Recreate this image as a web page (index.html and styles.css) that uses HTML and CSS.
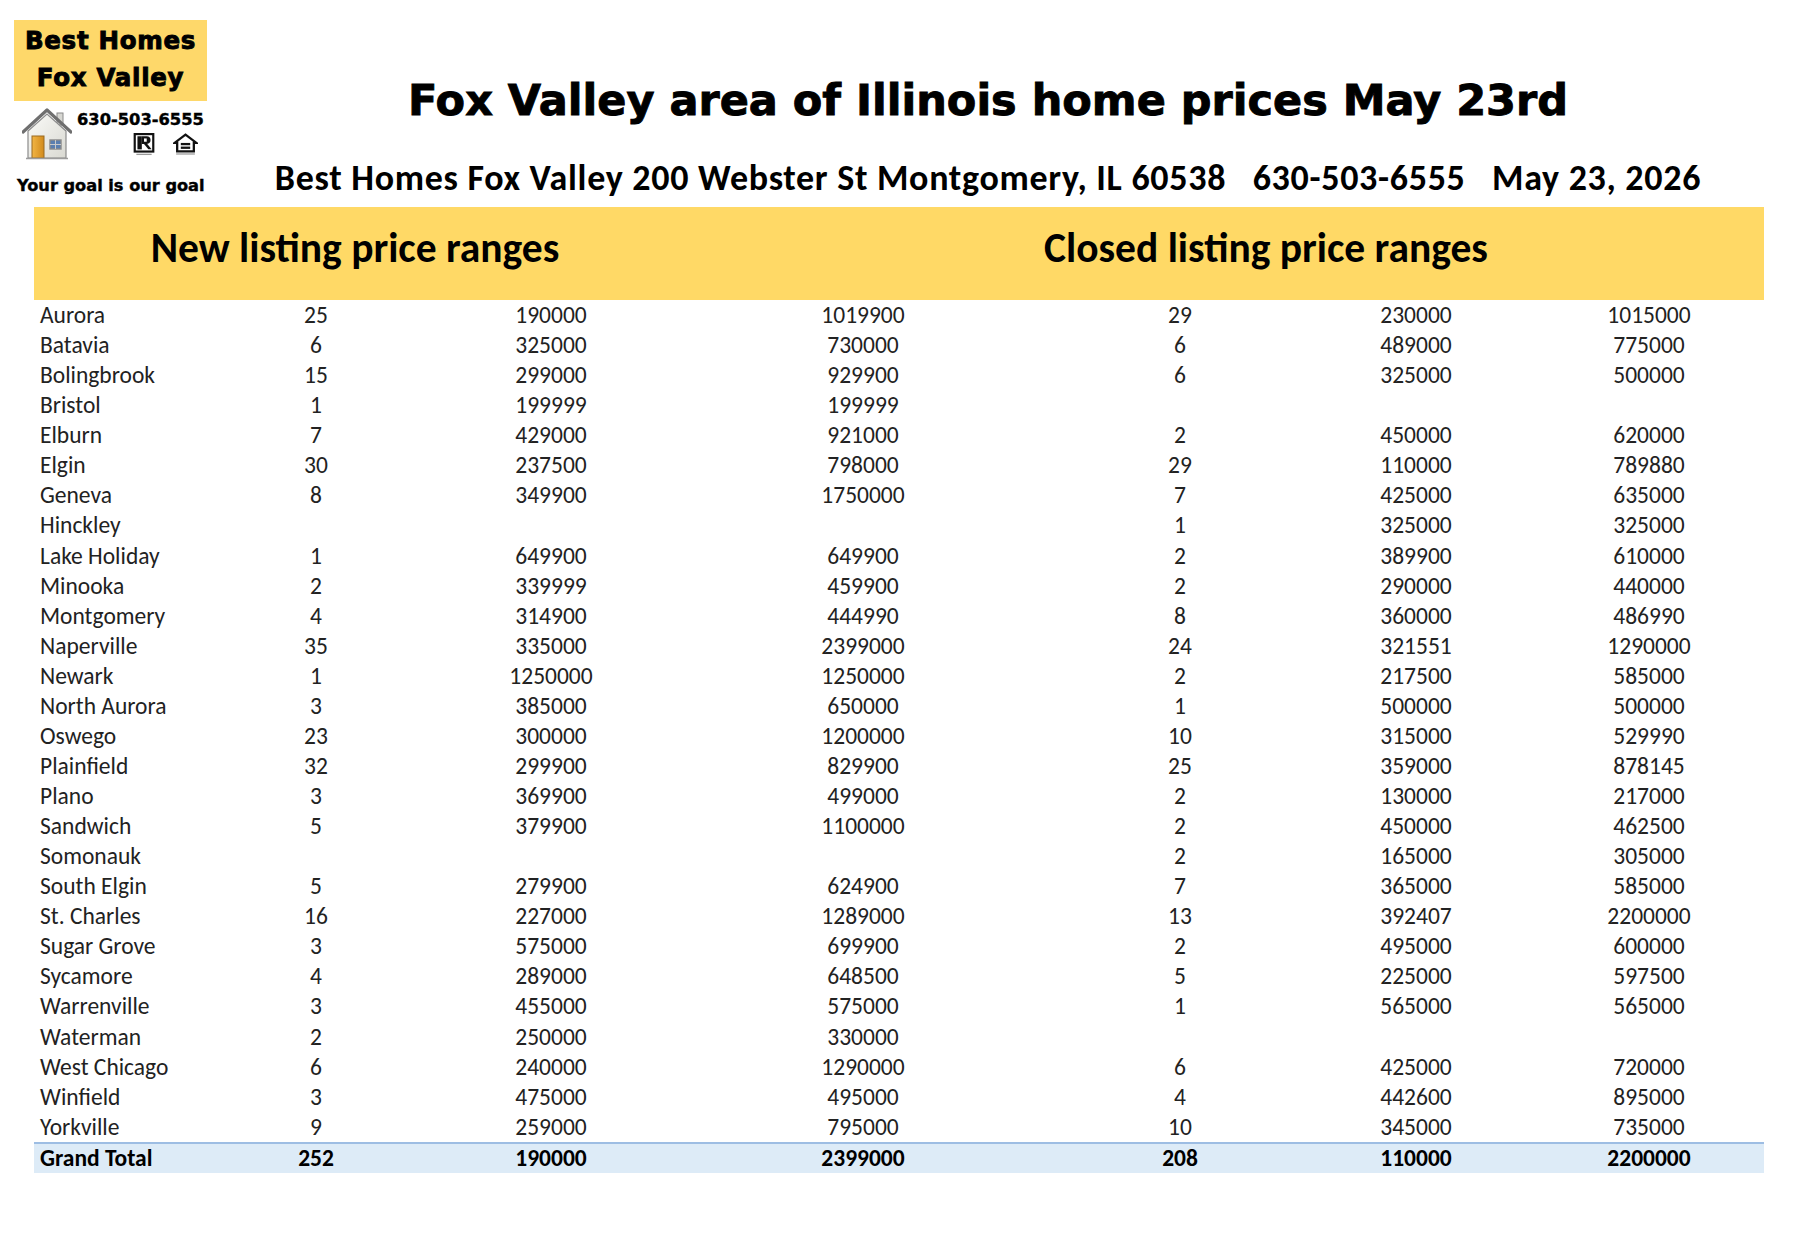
FILE: index.html
```html
<!DOCTYPE html>
<html lang="en">
<head>
<meta charset="utf-8">
<title>Fox Valley area of Illinois home prices May 23rd</title>
<link rel="stylesheet" href="styles.css">
</head>
<body>
<div class="page">
  <header class="top">
    <div class="logo">
      <div class="logo-box">
        <span>Best Homes</span>
        <span>Fox Valley</span>
      </div>
      <div class="logo-mid">
        <svg class="house" viewBox="0 0 50 52" width="50" height="52" aria-hidden="true">
          <defs>
            <linearGradient id="wall" x1="0" y1="0" x2="1" y2="1">
              <stop offset="0" stop-color="#fbfbf8"/>
              <stop offset="1" stop-color="#d9d9d2"/>
            </linearGradient>
            <linearGradient id="door" x1="0" y1="0" x2="1" y2="0">
              <stop offset="0" stop-color="#f2b544"/>
              <stop offset="1" stop-color="#d18a1c"/>
            </linearGradient>
          </defs>
          <rect x="35" y="5" width="6" height="12" fill="#d7d7d2" stroke="#8a8a8a" stroke-width="1"/>
          <path d="M6 23 L25 6 L44 23 L44 50 L6 50 Z" fill="url(#wall)" stroke="#8c8c8c" stroke-width="1.2"/>
          <path d="M1 24 L25 2 L49 24" fill="none" stroke="#6f6f6f" stroke-width="3.2" stroke-linejoin="round" stroke-linecap="round"/>
          <rect x="10" y="28" width="12" height="22" fill="url(#door)" stroke="#9a6a20" stroke-width="1"/>
          <rect x="28" y="32" width="11" height="9" fill="#5b7fb0" stroke="#8a8a8a" stroke-width="1.4"/>
          <line x1="33.5" y1="32" x2="33.5" y2="41" stroke="#c9c9c9" stroke-width="1"/>
          <line x1="28" y1="36.5" x2="39" y2="36.5" stroke="#c9c9c9" stroke-width="1"/>
          <line x1="4" y1="50.5" x2="46" y2="50.5" stroke="#9c9c9c" stroke-width="1.4"/>
        </svg>
        <div class="logo-right">
          <div class="phone">630-503-6555</div>
          <div class="badges">
            <svg class="badge" viewBox="0 0 20 22" width="22" height="24" aria-hidden="true">
              <rect x="1.5" y="1" width="17" height="16" fill="#fff" stroke="#111" stroke-width="2"/>
              <rect x="4" y="3" width="4" height="12" fill="#111"/>
              <path d="M8 3 H12.5 A3.5 3.5 0 0 1 12.5 10 H8 Z" fill="#111"/>
              <path d="M10 10 L14 15 H17 L13 10 Z" fill="#111"/>
              <rect x="10" y="5" width="2.5" height="3" fill="#fff"/>
              <rect x="3" y="19" width="14" height="1.2" fill="#9a9a9a"/>
            </svg>
            <svg class="badge eho" viewBox="0 0 24 22" width="25" height="23" aria-hidden="true">
              <path d="M12 1.5 L22.5 9.5 H20 V17.5 H4 V9.5 H1.5 Z" fill="#fff" stroke="#111" stroke-width="2.2" stroke-linejoin="miter"/>
              <rect x="7.5" y="9.5" width="9" height="2.2" fill="#111"/>
              <rect x="7.5" y="13" width="9" height="2.2" fill="#111"/>
              <rect x="3" y="19.5" width="18" height="1.2" fill="#9a9a9a"/>
            </svg>
          </div>
        </div>
      </div>
      <div class="tagline">Your goal is our goal</div>
    </div>
    <div class="titles">
      <h1 class="title">Fox Valley area of Illinois home prices May 23rd</h1>
      <p class="subtitle">Best Homes Fox Valley 200 Webster St Montgomery, IL 60538&nbsp;&nbsp;&nbsp;630-503-6555&nbsp;&nbsp;&nbsp;May 23, 2026</p>
    </div>
  </header>

  <section class="report">
    <div class="band">
      <h2 class="band-left">New listing price ranges</h2>
      <h2 class="band-right">Closed listing price ranges</h2>
    </div>
    <div class="grid">
      <div class="row"><span>Aurora</span><span>25</span><span>190000</span><span>1019900</span><span>29</span><span>230000</span><span>1015000</span></div>
      <div class="row"><span>Batavia</span><span>6</span><span>325000</span><span>730000</span><span>6</span><span>489000</span><span>775000</span></div>
      <div class="row"><span>Bolingbrook</span><span>15</span><span>299000</span><span>929900</span><span>6</span><span>325000</span><span>500000</span></div>
      <div class="row"><span>Bristol</span><span>1</span><span>199999</span><span>199999</span><span></span><span></span><span></span></div>
      <div class="row"><span>Elburn</span><span>7</span><span>429000</span><span>921000</span><span>2</span><span>450000</span><span>620000</span></div>
      <div class="row"><span>Elgin</span><span>30</span><span>237500</span><span>798000</span><span>29</span><span>110000</span><span>789880</span></div>
      <div class="row"><span>Geneva</span><span>8</span><span>349900</span><span>1750000</span><span>7</span><span>425000</span><span>635000</span></div>
      <div class="row"><span>Hinckley</span><span></span><span></span><span></span><span>1</span><span>325000</span><span>325000</span></div>
      <div class="row"><span>Lake Holiday</span><span>1</span><span>649900</span><span>649900</span><span>2</span><span>389900</span><span>610000</span></div>
      <div class="row"><span>Minooka</span><span>2</span><span>339999</span><span>459900</span><span>2</span><span>290000</span><span>440000</span></div>
      <div class="row"><span>Montgomery</span><span>4</span><span>314900</span><span>444990</span><span>8</span><span>360000</span><span>486990</span></div>
      <div class="row"><span>Naperville</span><span>35</span><span>335000</span><span>2399000</span><span>24</span><span>321551</span><span>1290000</span></div>
      <div class="row"><span>Newark</span><span>1</span><span>1250000</span><span>1250000</span><span>2</span><span>217500</span><span>585000</span></div>
      <div class="row"><span>North Aurora</span><span>3</span><span>385000</span><span>650000</span><span>1</span><span>500000</span><span>500000</span></div>
      <div class="row"><span>Oswego</span><span>23</span><span>300000</span><span>1200000</span><span>10</span><span>315000</span><span>529990</span></div>
      <div class="row"><span>Plainfield</span><span>32</span><span>299900</span><span>829900</span><span>25</span><span>359000</span><span>878145</span></div>
      <div class="row"><span>Plano</span><span>3</span><span>369900</span><span>499000</span><span>2</span><span>130000</span><span>217000</span></div>
      <div class="row"><span>Sandwich</span><span>5</span><span>379900</span><span>1100000</span><span>2</span><span>450000</span><span>462500</span></div>
      <div class="row"><span>Somonauk</span><span></span><span></span><span></span><span>2</span><span>165000</span><span>305000</span></div>
      <div class="row"><span>South Elgin</span><span>5</span><span>279900</span><span>624900</span><span>7</span><span>365000</span><span>585000</span></div>
      <div class="row"><span>St. Charles</span><span>16</span><span>227000</span><span>1289000</span><span>13</span><span>392407</span><span>2200000</span></div>
      <div class="row"><span>Sugar Grove</span><span>3</span><span>575000</span><span>699900</span><span>2</span><span>495000</span><span>600000</span></div>
      <div class="row"><span>Sycamore</span><span>4</span><span>289000</span><span>648500</span><span>5</span><span>225000</span><span>597500</span></div>
      <div class="row"><span>Warrenville</span><span>3</span><span>455000</span><span>575000</span><span>1</span><span>565000</span><span>565000</span></div>
      <div class="row"><span>Waterman</span><span>2</span><span>250000</span><span>330000</span><span></span><span></span><span></span></div>
      <div class="row"><span>West Chicago</span><span>6</span><span>240000</span><span>1290000</span><span>6</span><span>425000</span><span>720000</span></div>
      <div class="row"><span>Winfield</span><span>3</span><span>475000</span><span>495000</span><span>4</span><span>442600</span><span>895000</span></div>
      <div class="row"><span>Yorkville</span><span>9</span><span>259000</span><span>795000</span><span>10</span><span>345000</span><span>735000</span></div>
      <div class="row total"><span>Grand Total</span><span>252</span><span>190000</span><span>2399000</span><span>208</span><span>110000</span><span>2200000</span></div>
    </div>
  </section>
</div>
</body>
</html>
```
FILE: styles.css
```css
* { box-sizing: border-box; }

html, body {
  margin: 0;
  padding: 0;
  background: #ffffff;
}

body {
  width: 1800px;
  height: 1260px;
  overflow: hidden;
  color: #111;
  font-family: Carlito, Calibri, Lato, "Open Sans", sans-serif;
}

.page {
  width: 1800px;
}

/* ---------- header ---------- */
.top {
  display: flex;
  height: 207px;
  padding-top: 20px;
}

.logo {
  width: 207px;
  padding-left: 14px;
  display: flex;
  flex-direction: column;
  font-family: "DejaVu Sans", Verdana, sans-serif;
  font-weight: bold;
  color: #000;
}

.logo-box {
  width: 193px;
  height: 81px;
  background: #fed86a;
  display: flex;
  flex-direction: column;
  justify-content: center;
  align-items: center;
  font-size: 24.5px;
  line-height: 37px;
  letter-spacing: 0.7px;
  padding-bottom: 3px;
  -webkit-text-stroke: 0.9px #000;
}

.logo-mid {
  display: flex;
  margin-top: 7px;
  padding-left: 8px;
  height: 52px;
}

.house {
  display: block;
  flex: none;
}

.logo-right {
  display: flex;
  flex-direction: column;
  margin-left: 5px;
}

.phone {
  font-size: 16.3px;
  line-height: 18px;
  margin-top: 3px;
  -webkit-text-stroke: 0.4px #000;
}

.badges {
  display: flex;
  gap: 18px;
  padding-left: 56px;
  margin-top: 4px;
}

.badge {
  display: block;
}

.tagline {
  margin-top: 16px;
  font-size: 16.2px;
  line-height: 20px;
  padding-left: 3px;
  -webkit-text-stroke: 0.4px #000;
}

.titles {
  flex: 1;
  padding-right: 31px;
  text-align: center;
}

.title {
  margin: 55px 0 0 0;
  font-family: "DejaVu Sans", Verdana, sans-serif;
  font-weight: bold;
  font-size: 43px;
  line-height: 50px;
  color: #000;
  -webkit-text-stroke: 0.9px #000;
}

.subtitle {
  margin: 33px 0 0 0;
  font-weight: bold;
  font-size: 36px;
  line-height: 40px;
  letter-spacing: 0.7px;
  color: #000;
  white-space: nowrap;
}

/* ---------- report ---------- */
.report {
  margin-left: 34px;
  width: 1730px;
}

.band {
  display: flex;
  height: 93px;
  background: #ffd966;
  align-items: center;
  padding-bottom: 12px;
}

.band-left,
.band-right {
  margin: 0;
  font-weight: bold;
  font-size: 41.5px;
  line-height: 48px;
  color: #000;
  text-align: center;
  white-space: nowrap;
}

.band-left {
  width: 652px;
  padding-right: 10px;
}

.band-right {
  width: 1078px;
  padding-left: 82px;
}

.grid {
  display: flex;
  flex-direction: column;
}

.row {
  display: grid;
  grid-template-columns: 182px 200px 270px 354px 280px 192px 252px;
  height: 30.07px;
  align-items: center;
  font-size: 23.5px;
  line-height: 26px;
  color: #222;
}

.row span {
  text-align: center;
}

.row span:first-child {
  text-align: left;
  padding-left: 6px;
}

.row span:last-child {
  padding-left: 22px;
}

.row.total {
  height: 31px;
  background: #ddebf7;
  border-top: 2px solid #9dbde3;
  font-weight: bold;
  color: #000;
}
```
